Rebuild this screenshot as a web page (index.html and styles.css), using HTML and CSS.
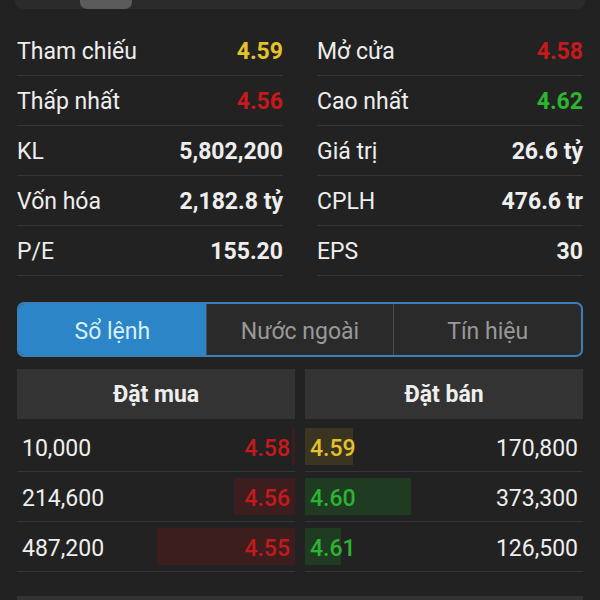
FILE: index.html
```html
<!DOCTYPE html>
<html lang="vi">
<head>
  <meta charset="UTF-8">
  <meta name="viewport" content="width=device-width, initial-scale=1.0">
  <title>Thông tin cổ phiếu</title>
  <link rel="stylesheet" href="styles.css">
</head>
<body>
  <div class="range-bar">
    <span class="range-bar__thumb"></span>
  </div>

  <!-- Thông tin giao dịch -->
  <div class="stats">
    <div class="stats__row"><span>Tham chiếu</span><b class="ref">4.59</b></div>
    <div class="stats__row"><span>Mở cửa</span><b class="down">4.58</b></div>
    <div class="stats__row"><span>Thấp nhất</span><b class="down">4.56</b></div>
    <div class="stats__row"><span>Cao nhất</span><b class="up">4.62</b></div>
    <div class="stats__row"><span>KL</span><b>5,802,200</b></div>
    <div class="stats__row"><span>Giá trị</span><b>26.6 tỷ</b></div>
    <div class="stats__row"><span>Vốn hóa</span><b>2,182.8 tỷ</b></div>
    <div class="stats__row"><span>CPLH</span><b>476.6 tr</b></div>
    <div class="stats__row"><span>P/E</span><b>155.20</b></div>
    <div class="stats__row"><span>EPS</span><b>30</b></div>
  </div>

  <div class="tabs">
    <div class="tabs__item is-active">Sổ lệnh</div>
    <div class="tabs__item">Nước ngoài</div>
    <div class="tabs__item">Tín hiệu</div>
  </div>

  <!-- Sổ lệnh -->
  <div class="book">
    <div class="book__head">Đặt mua</div>
    <div class="book__head">Đặt bán</div>

    <div class="book__row book__row--buy">
      <span class="book__bar" style="width: 1%"></span>
      <span>10,000</span><span class="price down">4.58</span>
    </div>
    <div class="book__row book__row--sell">
      <span class="book__bar book__bar--ref" style="width: 17.4%"></span>
      <span class="price ref">4.59</span><span>170,800</span>
    </div>

    <div class="book__row book__row--buy">
      <span class="book__bar" style="width: 21.9%"></span>
      <span>214,600</span><span class="price down">4.56</span>
    </div>
    <div class="book__row book__row--sell">
      <span class="book__bar book__bar--up" style="width: 38.1%"></span>
      <span class="price up">4.60</span><span>373,300</span>
    </div>

    <div class="book__row book__row--buy">
      <span class="book__bar" style="width: 49.7%"></span>
      <span>487,200</span><span class="price down">4.55</span>
    </div>
    <div class="book__row book__row--sell">
      <span class="book__bar book__bar--up" style="width: 12.9%"></span>
      <span class="price up">4.61</span><span>126,500</span>
    </div>
  </div>

  <div class="next-head"></div>
</body>
</html>
```

FILE: styles.css
```css
body {
  margin: 0;
  padding: 0 17px;
  background-color: #222;
  color: #eee;
  font-family: Roboto, "Noto Sans", sans-serif;
  overflow: hidden;
}

.ref { color: #e5c22a; }
.down { color: #c6191c; }
.up { color: #2db431; }

/* thanh chọn khoảng thời gian (phần dưới còn thấy) */
.range-bar {
  height: 9px;
  margin: 0 -2px;
  padding-left: 65px;
  background-color: #2b2b2b;
  border-radius: 0 0 8px 8px;
}
.range-bar__thumb {
  display: block;
  width: 52px;
  height: 9px;
  background-color: #5b5b5b;
  border-radius: 0 0 7px 7px;
}

.stats {
  display: grid;
  grid-template-columns: 1fr 1fr;
  column-gap: 34px;
  margin-top: 17px;
}
.stats__row {
  display: flex;
  justify-content: space-between;
  align-items: center;
  box-sizing: border-box;
  height: 50px;
  padding-top: 1px;
  border-bottom: 1px solid #363636;
  font-size: 23px;
}
.stats__row b {
  font-weight: 700;
}

.tabs {
  display: flex;
  height: 51px;
  margin-top: 26px;
  border: 2px solid #3a7fb9;
  border-radius: 7px;
  overflow: hidden;
  background-color: #2a2a2a;
}
.tabs__item {
  flex: 1;
  display: flex;
  align-items: center;
  justify-content: center;
  padding-top: 3px;
  font-size: 23px;
  color: #999;
}
.tabs__item + .tabs__item {
  border-left: 1px solid #4a4a4a;
}
.tabs__item.is-active {
  background-color: #2b85c7;
  color: #d8eefb;
}

.book {
  display: grid;
  grid-template-columns: 1fr 1fr;
  column-gap: 10px;
  margin-top: 12px;
}
.book__head {
  display: flex;
  align-items: center;
  justify-content: center;
  height: 50px;
  margin-bottom: 3px;
  background-color: #333;
  font-size: 23px;
  font-weight: 700;
}
.book__row {
  position: relative;
  display: flex;
  justify-content: space-between;
  align-items: center;
  box-sizing: border-box;
  height: 50px;
  padding: 3px 5px 0;
  border-bottom: 1px solid #363636;
  font-size: 23px;
}
.book__row span {
  position: relative;
}
.book__row .price {
  font-weight: 500;
}
.book__row span.book__bar {
  position: absolute;
  top: 6px;
  bottom: 6px;
  background-color: #3c1e1f;
}
.book__row--buy .book__bar {
  right: 0;
}
.book__row--sell .book__bar {
  left: 0;
}
.book__bar--ref {
  background-color: #3a3420 !important;
}
.book__bar--up {
  background-color: #1f3b22 !important;
}

.next-head {
  height: 30px;
  margin-top: 24px;
  background-color: #333;
}
```
